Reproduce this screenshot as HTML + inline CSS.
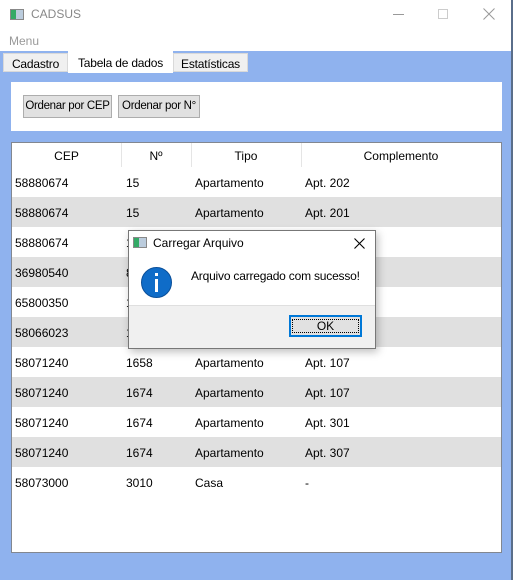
<!DOCTYPE html>
<html><head><meta charset="utf-8"><style>
*{margin:0;padding:0;box-sizing:border-box}
body{width:513px;height:580px;position:relative;overflow:hidden;font-family:"Liberation Sans",sans-serif;font-size:12px;color:#000;background:#fff}
.abs{position:absolute}
.blue{left:0;top:51px;width:511px;height:529px;background:#8fb2ee}
.rb{left:511px;top:0;width:2px;height:580px;background:#5a6e8a}
.tab{top:53px;height:19px;background:#f0f0f0;border:1px solid #d9d9d9;padding:3px 0 0 0;text-align:center;white-space:nowrap;letter-spacing:-0.2px}
.btn{top:95px;height:23px;background:#e1e1e1;border:1px solid #adadad;text-align:center;padding-top:4px;white-space:nowrap;font-size:11.5px;letter-spacing:-0.3px}
.row{left:12px;width:489px;height:30px}
.row span{position:absolute;top:9px}
.hd span{position:absolute;top:6px;text-align:center}
</style></head><body>
<div class="abs" style="left:10px;top:9px;width:14px;height:11px;border:1px solid #888;background:linear-gradient(90deg,#3a6 0 40%,#bcd 40%)"></div>
<div class="abs" style="left:31px;top:7px;color:#888;font-size:12px">CADSUS</div>
<div class="abs" style="left:393px;top:14px;width:11px;height:1px;background:#999"></div>
<div class="abs" style="left:438px;top:9px;width:10px;height:10px;border:1px solid #ccc"></div>
<svg class="abs" style="left:483px;top:8px" width="12" height="12"><path d="M0.5 0.5L11.5 11.5M11.5 0.5L0.5 11.5" stroke="#999" stroke-width="1"/></svg>
<div class="abs" style="left:9px;top:34px;color:#999">Menu</div>
<div class="abs blue"></div>
<div class="abs rb"></div>
<div class="abs tab" style="left:3px;width:65px">Cadastro</div>
<div class="abs tab" style="left:68px;width:105px;top:51px;height:22px;background:#fff;border-color:#fff;padding-top:4px">Tabela de dados</div>
<div class="abs tab" style="left:173px;width:75px">Estatísticas</div>
<div class="abs" style="left:11px;top:82px;width:491px;height:49px;background:#fff"></div>
<div class="abs btn" style="left:23px;width:89px">Ordenar por CEP</div>
<div class="abs btn" style="left:118px;width:82px">Ordenar por N°</div>
<div class="abs" style="left:11px;top:142px;width:491px;height:411px;background:#fff;border:1px solid #828790"></div>
<div class="abs row hd" style="top:143px;height:24px">
<span style="left:0;width:109px">CEP</span><span style="left:109px;width:70px">Nº</span><span style="left:179px;width:110px">Tipo</span><span style="left:289px;width:200px">Complemento</span>
<div class="abs" style="left:109px;top:0;width:1px;height:24px;background:#e5e5e5"></div>
<div class="abs" style="left:179px;top:0;width:1px;height:24px;background:#e5e5e5"></div>
<div class="abs" style="left:289px;top:0;width:1px;height:24px;background:#e5e5e5"></div>
</div>
<div class="abs row" style="top:167px"><span style="left:3px">58880674</span><span style="left:114px">15</span><span style="left:183px">Apartamento</span><span style="left:293px">Apt. 202</span></div>
<div class="abs row" style="top:197px;background:#e0e0e0"><span style="left:3px">58880674</span><span style="left:114px">15</span><span style="left:183px">Apartamento</span><span style="left:293px">Apt. 201</span></div>
<div class="abs row" style="top:227px"><span style="left:3px">58880674</span><span style="left:114px">15</span></div>
<div class="abs row" style="top:257px;background:#e0e0e0"><span style="left:3px">36980540</span><span style="left:114px">8</span></div>
<div class="abs row" style="top:287px"><span style="left:3px">65800350</span><span style="left:114px">1</span></div>
<div class="abs row" style="top:317px;background:#e0e0e0"><span style="left:3px">58066023</span><span style="left:114px">1</span></div>
<div class="abs row" style="top:347px"><span style="left:3px">58071240</span><span style="left:114px">1658</span><span style="left:183px">Apartamento</span><span style="left:293px">Apt. 107</span></div>
<div class="abs row" style="top:377px;background:#e0e0e0"><span style="left:3px">58071240</span><span style="left:114px">1674</span><span style="left:183px">Apartamento</span><span style="left:293px">Apt. 107</span></div>
<div class="abs row" style="top:407px"><span style="left:3px">58071240</span><span style="left:114px">1674</span><span style="left:183px">Apartamento</span><span style="left:293px">Apt. 301</span></div>
<div class="abs row" style="top:437px;background:#e0e0e0"><span style="left:3px">58071240</span><span style="left:114px">1674</span><span style="left:183px">Apartamento</span><span style="left:293px">Apt. 307</span></div>
<div class="abs row" style="top:467px"><span style="left:3px">58073000</span><span style="left:114px">3010</span><span style="left:183px">Casa</span><span style="left:293px">-</span></div>
<!-- dialog -->
<div class="abs" style="left:128px;top:230px;width:248px;height:119px;background:#fff;border:1px solid #777;box-shadow:2px 3px 8px rgba(0,0,0,.25)">
<div class="abs" style="left:4px;top:6px;width:14px;height:11px;border:1px solid #888;background:linear-gradient(90deg,#3a6 0 40%,#bcd 40%)"></div>
<div class="abs" style="left:24px;top:5px">Carregar Arquivo</div>
<svg class="abs" style="left:225px;top:7px" width="11" height="11"><path d="M0.5 0.5L10.5 10.5M10.5 0.5L0.5 10.5" stroke="#000" stroke-width="1.1"/></svg>
<div class="abs" style="left:12px;top:36px;width:31px;height:31px;border-radius:50%;background:#0f6cc8;border:1px solid #0a4f99"></div>
<div class="abs" style="left:26px;top:42px;width:3px;height:3px;background:#fff"></div>
<div class="abs" style="left:26px;top:48px;width:3px;height:13px;background:#fff"></div>
<div class="abs" style="left:62px;top:38px;white-space:nowrap;letter-spacing:-0.2px">Arquivo carregado com sucesso!</div>
<div class="abs" style="left:0;top:74px;width:246px;height:43px;background:#f0f0f0;border-top:1px solid #dfdfdf"></div>
<div class="abs" style="left:160px;top:84px;width:73px;height:22px;background:#e1e1e1;border:2px solid #0078d7;text-align:center;padding-top:2px"><div style="border:1px dotted #000;height:14px;margin:0 1px;line-height:13px">OK</div></div>
</div>
</body></html>
